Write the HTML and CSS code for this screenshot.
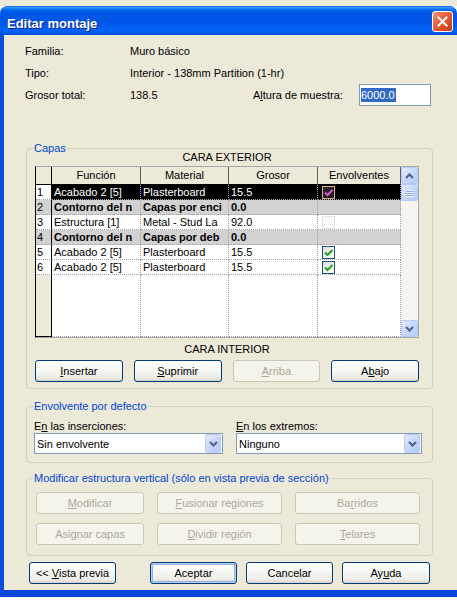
FILE: index.html
```html
<!DOCTYPE html>
<html lang="es">
<head>
<meta charset="utf-8">
<title>Editar montaje</title>
<link rel="stylesheet" href="styles.css">
</head>
<body>
<div class="desk"></div>
<div class="window">
  <div class="titlebar">
    <span class="title">Editar montaje</span>
    <span class="close"><svg width="13" height="13" viewBox="0 0 13 13"><path d="M2.5 2.5 L10.5 10.5 M10.5 2.5 L2.5 10.5" stroke="#fff" stroke-width="2" stroke-linecap="square"/></svg></span>
  </div>
  <div class="frame">
    <div class="info">
      <div class="row"><span class="lbl">Familia:</span><span>Muro básico</span></div>
      <div class="row"><span class="lbl">Tipo:</span><span>Interior - 138mm Partition (1-hr)</span></div>
      <div class="row"><span class="lbl">Grosor total:</span><span class="val2">138.5</span><span class="lbl2">A<u>l</u>tura de muestra:</span><span class="input"><span class="seltxt">6000.0</span></span></div>
    </div>

    <div class="group capas">
      <span class="legend">Capas</span>
      <div class="face">CARA EXTERIOR</div>
      <div class="grid">
        <div class="table">
          <div class="h num"></div><div class="h">Función</div><div class="h">Material</div><div class="h">Grosor</div><div class="h">Envolventes</div>

          <div class="c num">1</div><div class="c sel">Acabado 2 [5]</div><div class="c sel">Plasterboard</div><div class="c sel">15.5</div><div class="c sel cbcell"><span class="cb inv"><svg width="11" height="11" viewBox="0 0 11 11"><path d="M2 5.5 L4.5 8 L9.5 3" stroke="#D95BD9" stroke-width="2" fill="none"/></svg></span></div>

          <div class="c num core">2</div><div class="c core b">Contorno del n</div><div class="c core b">Capas por enci</div><div class="c core b">0.0</div><div class="c core"></div>

          <div class="c num">3</div><div class="c">Estructura [1]</div><div class="c">Metal - Stud La</div><div class="c">92.0</div><div class="c cbcell"><span class="cb off"></span></div>

          <div class="c num core">4</div><div class="c core b">Contorno del n</div><div class="c core b">Capas por deb</div><div class="c core b">0.0</div><div class="c core"></div>

          <div class="c num">5</div><div class="c">Acabado 2 [5]</div><div class="c">Plasterboard</div><div class="c">15.5</div><div class="c cbcell"><span class="cb"><svg width="11" height="11" viewBox="0 0 11 11"><path d="M2 5.5 L4.5 8 L9.5 3" stroke="#21A121" stroke-width="2" fill="none"/></svg></span></div>

          <div class="c num">6</div><div class="c">Acabado 2 [5]</div><div class="c">Plasterboard</div><div class="c">15.5</div><div class="c cbcell"><span class="cb"><svg width="11" height="11" viewBox="0 0 11 11"><path d="M2 5.5 L4.5 8 L9.5 3" stroke="#21A121" stroke-width="2" fill="none"/></svg></span></div>

          <div class="f num"></div><div class="f"></div><div class="f"></div><div class="f"></div><div class="f"></div>
        </div>
        <div class="vscroll">
          <span class="sb"><svg width="9" height="6" viewBox="0 0 9 6"><path d="M1 5 L4.5 1.5 L8 5" stroke="#4D6185" stroke-width="2" fill="none"/></svg></span>
          <span class="sb thumb"><svg width="8" height="8" viewBox="0 0 8 8"><path d="M0 1.5 H8 M0 3.5 H8 M0 5.5 H8 M0 7.5 H8" stroke="#EEF3FE" stroke-width="1"/><path d="M0 2.5 H8 M0 4.5 H8 M0 6.5 H8" stroke="#8DAEF0" stroke-width="1"/></svg></span>
          <span class="sp"></span>
          <span class="sb"><svg width="9" height="6" viewBox="0 0 9 6"><path d="M1 1 L4.5 4.5 L8 1" stroke="#4D6185" stroke-width="2" fill="none"/></svg></span>
        </div>
      </div>
      <div class="face bot">CARA INTERIOR</div>
      <div class="btnrow">
        <span class="btn"><span><u>I</u>nsertar</span></span>
        <span class="btn"><span><u>S</u>uprimir</span></span>
        <span class="btn dis"><span><u>A</u>rriba</span></span>
        <span class="btn"><span>A<u>b</u>ajo</span></span>
      </div>
    </div>

    <div class="group env">
      <span class="legend">Envolvente por defecto</span>
      <div class="cols">
        <div class="col1">
          <div class="clbl">E<u>n</u> las inserciones:</div>
          <div class="combo"><span class="txt">Sin envolvente</span><span class="dd"><svg width="9" height="6" viewBox="0 0 9 6"><path d="M1 1 L4.5 4.5 L8 1" stroke="#4D6185" stroke-width="2" fill="none"/></svg></span></div>
        </div>
        <div class="col2">
          <div class="clbl"><u>E</u>n los extremos:</div>
          <div class="combo"><span class="txt">Ninguno</span><span class="dd"><svg width="9" height="6" viewBox="0 0 9 6"><path d="M1 1 L4.5 4.5 L8 1" stroke="#4D6185" stroke-width="2" fill="none"/></svg></span></div>
        </div>
      </div>
    </div>

    <div class="group mod">
      <span class="legend">Modificar estructura vertical (sólo en vista previa de sección)</span>
      <div class="mgrid">
        <span class="btn dis"><span><u>M</u>odificar</span></span>
        <span class="btn dis"><span><u>F</u>usionar regiones</span></span>
        <span class="btn dis"><span>Ba<u>r</u>ridos</span></span>
        <span class="btn dis"><span>Asi<u>g</u>nar capas</span></span>
        <span class="btn dis"><span><u>D</u>ividir región</span></span>
        <span class="btn dis"><span><u>T</u>elares</span></span>
      </div>
    </div>

    <div class="actions">
      <span class="btn a1"><span>&lt;&lt; <u>V</u>ista previa</span></span>
      <span class="btn def a2"><span>Aceptar</span></span>
      <span class="btn a3"><span>Cancelar</span></span>
      <span class="btn a4"><span>Ay<u>u</u>da</span></span>
    </div>
  </div>
</div>
<div class="under"></div>
</body>
</html>
```

FILE: styles.css
```css
* { box-sizing: border-box; }
html, body { margin: 0; padding: 0; }
body {
  width: 457px;
  height: 604px;
  overflow: hidden;
  background: #fff;
  font-family: "Liberation Sans", Arial, sans-serif;
  font-size: 11px;
  color: #000;
}
u { text-decoration: underline; text-underline-offset: 1px; }

.desk { height: 6px; background: #ECE9D8; }
.window { width: 457px; }

.titlebar {
  height: 29px;
  display: flex;
  justify-content: space-between;
  align-items: flex-start;
  border-radius: 7px 7px 0 0;
  background: linear-gradient(to bottom, #0A5CE6 0%, #3D95FF 4%, #2A8BFF 7%, #1179FA 10%, #0467F2 14%, #005BE9 20%, #0056E5 30%, #0056E8 60%, #005DF3 72%, #0264F8 82%, #005CEE 90%, #0050DC 100%);
}
.title {
  padding: 6px 0 0 7px;
  line-height: 23px;
  font-size: 13px;
  font-weight: bold;
  color: #fff;
  text-shadow: 1px 1px 0 #0F1F8F;
}
.close {
  width: 21px;
  height: 21px;
  margin: 5px 4px 0 0;
  border: 1px solid #fff;
  border-radius: 3px;
  background: linear-gradient(135deg, #F3977A 0%, #E4633D 40%, #D44A20 75%, #C03A12 100%);
  display: flex;
  align-items: center;
  justify-content: center;
}

.frame {
  background: #ECE9D8;
  border-left: 4px solid #0B4BDC;
  border-bottom: 7px solid #0A46D6;
  padding: 5px 0 6px 0;
}

.info { padding-left: 21px; }
.row { display: flex; align-items: center; height: 22px; }
.lbl { width: 105px; }
.val2 { width: 123px; }
.lbl2 { width: 106px; }
.input {
  width: 72px;
  height: 22px;
  border: 1px solid #7F9DB9;
  background: #fff;
  display: flex;
  align-items: center;
  padding-left: 1px;
}
.seltxt { background: #316AC5; color: #fff; line-height: 14px; padding-right: 1px; }

.group {
  position: relative;
  width: 407px;
  margin-left: 22px;
  border: 1px solid #D0D0BF;
  border-radius: 4px;
}
.legend {
  position: absolute;
  top: -8px;
  left: 6px;
  padding: 0 1px;
  line-height: 14px;
  background: #ECE9D8;
  color: #0046D5;
  white-space: nowrap;
}

.capas { margin-top: 42px; padding: 0 13px 6px 8px; }
.face { height: 17px; line-height: 17px; text-align: center; font-weight: normal; }
.face.bot { height: 22px; line-height: 22px; }

.grid {
  display: flex;
  width: 384px;
  height: 172px;
  border: 1px solid #A7A6AA;
  border-left-color: #000;
  background: #fff;
}
.table {
  display: grid;
  grid-template-columns: 16px 89px 88px 89px 83px;
  grid-template-rows: 18px repeat(6, 15px) 62px;
  width: 365px;
}
.h {
  background: #ECE9D8;
  border-right: 1px solid #5E5C54;
  border-bottom: 1px solid #000;
  text-align: center;
  line-height: 17px;
}
.c {
  border-right: 1px dotted #A0A0A0;
  border-bottom: 1px dotted #A0A0A0;
  padding-left: 2px;
  line-height: 14px;
  white-space: nowrap;
  overflow: hidden;
}
.num { border-right: 1px solid #000; padding-left: 1px; }
.h.num { border-right: 1px solid #000; }
.sel { background: #000; color: #fff; }
.core { background: #D2D2D2; }
.b { font-weight: bold; }
.f { border-right: 1px dotted #A0A0A0; border-bottom: 1px dotted #A0A0A0; }
.f.num { background: #ECE9D8; border-right: 1px solid #000; border-bottom: 1px solid #000; }

.cbcell { display: flex; align-items: center; padding-left: 4px; }
.cb {
  width: 13px;
  height: 13px;
  border: 1px solid #1C5180;
  background: linear-gradient(135deg, #DCDCD7 0%, #F4F4F1 60%, #fff 100%);
  display: flex;
}
.cb.inv { border-color: #E3AE7F; background: linear-gradient(135deg, #2A2A30 0%, #15151a 100%); }
.cb.off { border-color: #E2E2E2; background: #FAFAFA; }

.vscroll {
  width: 17px;
  background: #F5F4EF;
  display: flex;
  flex-direction: column;
}
.sb {
  width: 17px;
  height: 17px;
  border: 1px solid #B7CAF4;
  border-radius: 2px;
  background: linear-gradient(135deg, #E3EBFE 0%, #CAD8FC 45%, #B6CAF8 100%);
  display: flex;
  align-items: center;
  justify-content: center;
}
.sp { flex: 1; }

.btnrow { display: flex; gap: 11px; }
.btnrow .btn { width: 88px; }

.btn {
  height: 22px;
  border: 1px solid #003C74;
  border-radius: 3px;
  background: linear-gradient(to bottom, #FFFFFF 0%, #F7F7F4 40%, #EFEEE9 78%, #E3E1D9 92%, #D6D0C5 100%);
  display: flex;
  align-items: center;
  justify-content: center;
  white-space: nowrap;
  color: #000;
}
.btn.dis {
  border-color: #C9C7BA;
  background: #F5F4EA;
  color: #ACA899;
}
.btn.def { box-shadow: inset 0 0 0 1px #B8D0F6, inset 0 0 0 2px #8FB0EA; }

.env { margin-top: 17px; padding: 13px 10px 8px 7px; }
.cols { display: flex; gap: 13px; }
.col1 { width: 189px; }
.col2 { width: 186px; }
.clbl { height: 13px; line-height: 13px; }
.combo {
  height: 21px;
  border: 1px solid #7F9DB9;
  background: #fff;
  display: flex;
  align-items: center;
  padding-left: 2px;
}
.combo .txt { flex: 1; }
.dd {
  width: 16px;
  height: 19px;
  margin-right: 1px;
  border: 1px solid #BCCDF4;
  border-radius: 2px;
  background: linear-gradient(135deg, #E3EBFE 0%, #CAD8FC 45%, #B6CAF8 100%);
  display: flex;
  align-items: center;
  justify-content: center;
}

.mod { margin-top: 15px; padding: 13px 12px 10px 9px; }
.mgrid {
  display: grid;
  grid-template-columns: 108px 125px 125px;
  grid-auto-rows: 22px;
  column-gap: 13px;
  row-gap: 9px;
}

.actions { display: flex; margin: 6px 0 0 25px; }
.a1 { width: 87px; }
.a2 { width: 87px; margin-left: 34px; }
.a3 { width: 87px; margin-left: 9px; }
.a4 { width: 88px; margin-left: 9px; }

.under { height: 7px; background: #fff; }
```
